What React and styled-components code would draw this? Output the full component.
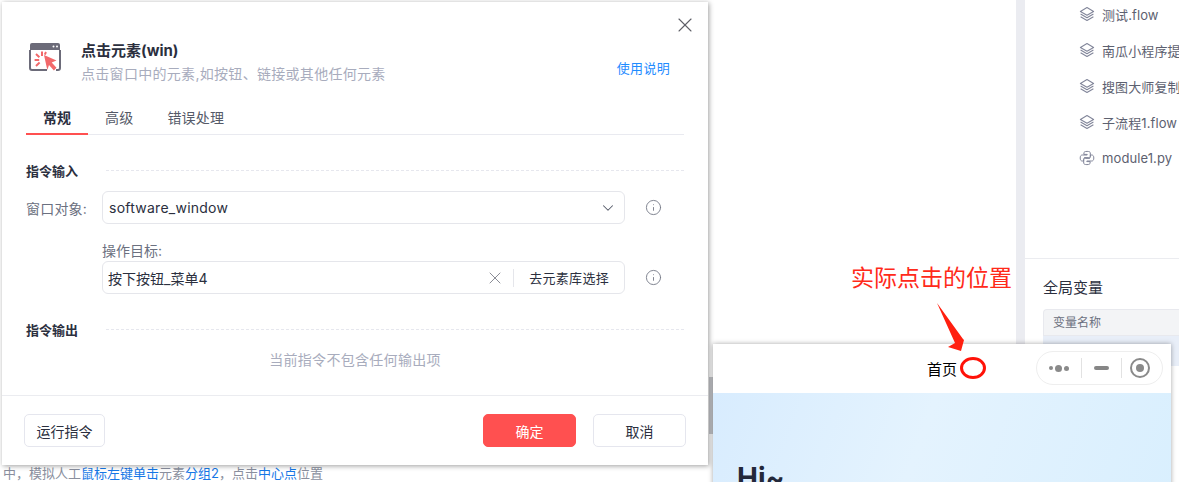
import React from "react";
import styled, { createGlobalStyle } from "styled-components";
import { X, ChevronDown, Info } from "lucide-react";

const Global = createGlobalStyle`
  html, body { margin: 0; padding: 0; height: 100%; background: #fff; overflow: hidden; }
  #root { width: 1179px; height: 482px; }
  * { box-sizing: border-box; }
  body { font-family: Inter, "Noto Sans CJK SC", "Noto Sans", sans-serif; }
`;

const Page = styled.div`
  position: relative;
  width: 1179px;
  height: 482px;
  display: flex;
  overflow: hidden;
  background: #fff;
`;
const Main = styled.main`
  width: 1016px;
  display: flex;
  flex-direction: column;
  justify-content: flex-end;
  padding: 0 0 0 3px;
`;
const DocLine = styled.p`
  margin: 0;
  height: 17px;
  font-size: 13px;
  line-height: 17px;
  color: #8a8f9e;
  white-space: nowrap;
`;
const DocLink = styled.span`
  color: #1677e6;
`;
const Gutter = styled.div`
  width: 9px;
  background: #ebecf1;
`;
const Side = styled.aside`
  flex: 1;
  min-width: 0;
  display: flex;
  flex-direction: column;
  overflow: hidden;
`;
const Tree = styled.ul`
  list-style: none;
  margin: -4px 0 0;
  padding: 0 0 0 54px;
  height: 263px;
  flex: none;
  border-bottom: 1px solid #ebecf0;
  display: flex;
  flex-direction: column;
`;
const TreeItem = styled.li`
  height: 36px;
  flex: none;
  display: flex;
  align-items: center;
  gap: 7px;
  font-size: 13px;
  letter-spacing: 0.1px;
  color: #5d6170;
  white-space: nowrap;
  & > svg {
    flex: none;
  }
`;
const Vars = styled.section`
  padding: 19px 0 0 18px;
`;
const VarsTitle = styled.h3`
  margin: 0 0 11px;
  font-size: 15px;
  line-height: 20px;
  font-weight: 400;
  color: #2b2f3e;
`;
const VarsHead = styled.div`
  height: 27px;
  padding-left: 9px;
  font-size: 12px;
  line-height: 26px;
  color: #6b7080;
  background: #f3f4f6;
  border: 1px solid #e8e9ee;
  border-right: 0;
  border-radius: 4px 0 0 0;
`;
const VarsRow = styled.div`
  height: 30px;
  background: #e8eef8;
`;

const Dialog = styled.div`
  position: absolute;
  left: 2px;
  top: 2px;
  width: 706px;
  height: 463px;
  background: #fff;
  box-shadow: 1px 1px 5px rgba(0, 0, 0, 0.38);
  display: flex;
  flex-direction: column;
`;
const CloseBtn = styled.button`
  position: absolute;
  right: 11px;
  top: 11px;
  width: 24px;
  height: 24px;
  padding: 0;
  border: 0;
  background: none;
  color: #5f6068;
  display: flex;
`;
const Header = styled.header`
  display: flex;
  align-items: flex-start;
  padding: 40px 38px 0 27px;
  height: 106px;
`;
const HeadIcon = styled.div`
  width: 34px;
  height: 30px;
  margin-right: 18px;
  flex: none;
`;
const HeadText = styled.div`
  flex: 1;
`;
const Title = styled.h2`
  margin: 0;
  font-size: 15px;
  line-height: 18px;
  font-weight: 700;
  color: #2b2f3e;
`;
const Sub = styled.p`
  margin: 5px 0 0;
  font-size: 14px;
  line-height: 18px;
  letter-spacing: 0.3px;
  color: #a8acbd;
`;
const HelpLink = styled.a`
  margin-top: 17px;
  font-size: 13px;
  line-height: 18px;
  letter-spacing: 0.3px;
  color: #1f8cff;
`;
const Tabs = styled.nav`
  display: flex;
  margin: 0 24px;
  height: 27px;
  border-bottom: 1px solid #e9eaf0;
`;
const Tab = styled.div`
  padding: 0 17px;
  font-size: 14px;
  line-height: 20px;
  letter-spacing: ${(p) => (p.$active ? 0 : 0.2)}px;
  font-weight: ${(p) => (p.$active ? 700 : 400)};
  color: ${(p) => (p.$active ? "#2b2f3e" : "#555a68")};
  border-bottom: 2px solid ${(p) => (p.$active ? "#ff5050" : "transparent")};
  height: 27px;
`;
const Body = styled.div`
  flex: 1;
  padding: 27px 24px 0;
  display: flex;
  flex-direction: column;
`;
const SectionHead = styled.div`
  display: flex;
  align-items: flex-start;
  height: 20px;
  margin-top: ${(p) => p.$mt || 0}px;
`;
const SectionTitle = styled.h4`
  margin: 0;
  width: 80px;
  font-size: 13px;
  line-height: 18px;
  font-weight: 700;
  color: #2b2f3e;
`;
const Dash = styled.div`
  flex: 1;
  margin-top: 8px;
  border-top: 1px dashed #e6e7ee;
`;
const Row = styled.div`
  display: flex;
  align-items: center;
  margin-top: ${(p) => p.$mt || 0}px;
`;
const RowLabel = styled.label`
  width: 76px;
  flex: none;
  font-size: 14px;
  letter-spacing: 0.2px;
  color: #6b7080;
  white-space: nowrap;
`;
const Field = styled.div`
  width: 523px;
  height: 33px;
  border: 1px solid #e5e6eb;
  border-radius: 6px;
  display: flex;
  align-items: center;
  padding: 0 ${(p) => p.$pr || 0}px 0 ${(p) => p.$pl || 6}px;
  font-size: 14px;
  color: #2b2f3e;
  background: #fff;
  margin-left: ${(p) => p.$ml || 0}px;
`;
const FieldText = styled.span`
  flex: 1;
  letter-spacing: ${(p) => p.$ls || 0}px;
`;
const InfoWrap = styled.span`
  display: flex;
  margin: -1px 0 0 20px;
  color: #777b88;
`;
const SubLabel = styled.div`
  margin: 18px 0 0 76px;
  font-size: 14px;
  line-height: 18px;
  color: #6b7080;
`;
const ClearBtn = styled.span`
  display: flex;
  color: #8b8d96;
  margin-right: 8px;
`;
const FieldBtn = styled.span`
  height: 18px;
  line-height: 18px;
  border-left: 1px solid #e5e6eb;
  padding: 0 15px;
  font-size: 13px;
  letter-spacing: 0.3px;
  color: #2b2f3e;
  white-space: nowrap;
`;
const Empty = styled.p`
  margin: 10px 0 0;
  text-align: center;
  font-size: 14px;
  line-height: 18px;
  letter-spacing: 0.3px;
  color: #a8acbd;
`;
const Footer = styled.footer`
  height: 70px;
  border-top: 1px solid #ebecf0;
  padding: 18px 22px 0;
  display: flex;
  align-items: flex-start;
`;
const Btn = styled.button`
  height: 33px;
  width: ${(p) => p.$w}px;
  margin-left: ${(p) => p.$ml || 0}px;
  border-radius: 5px;
  border: 1px solid ${(p) => (p.$primary ? "#ff5050" : "#e5e6ee")};
  background: ${(p) => (p.$primary ? "#ff5050" : "#fff")};
  color: ${(p) => (p.$primary ? "#fff" : "#2b2f3e")};
  font-family: inherit;
  font-size: 14px;
  padding: 0;
`;

const Annotation = styled.div`
  position: absolute;
  left: 851px;
  top: 262px;
  font-size: 23px;
  line-height: 32px;
  color: #ff2a1a;
  white-space: nowrap;
`;
const ArrowSvg = styled.svg`
  position: absolute;
  left: 930px;
  top: 298px;
  z-index: 2;
`;
const Inset = styled.div`
  position: absolute;
  left: 713px;
  top: 344px;
  width: 458px;
  height: 160px;
  background: #fff;
  box-shadow: 0 0 5px rgba(0, 0, 0, 0.35);
  display: flex;
  flex-direction: column;
`;
const InsetBar = styled.div`
  height: 49px;
  flex: none;
  display: flex;
  align-items: center;
  justify-content: space-between;
  padding: 0 8px 1px 214px;
  font-family: "Noto Sans CJK SC", sans-serif;
  font-size: 15px;
  color: #000;
`;
const InsetTitle = styled.span`
  flex: none;
`;
const Capsule = styled.div`
  width: 127px;
  height: 34px;
  flex: none;
  border: 1px solid #eeeeee;
  border-radius: 17px;
  display: flex;
  align-items: center;
`;
const CapCell = styled.div`
  width: ${(p) => p.$w}px;
  flex: none;
  height: 20px;
  padding-right: ${(p) => p.$pr || 0}px;
  display: flex;
  align-items: center;
  justify-content: center;
  & + & {
    border-left: 1px solid #e2e2e2;
  }
`;
const Dot = styled.i`
  display: block;
  width: ${(p) => p.$s}px;
  height: ${(p) => p.$s}px;
  border-radius: 50%;
  background: #8a8a8a;
  margin: 0 1px;
`;
const Minus = styled.i`
  display: block;
  width: 15px;
  height: 4px;
  border-radius: 2px;
  background: #868686;
`;
const Target = styled.i`
  display: flex;
  align-items: center;
  justify-content: center;
  width: 20px;
  height: 20px;
  border: 2px solid #8a8a8a;
  border-radius: 50%;
  &::after {
    content: "";
    width: 8px;
    height: 8px;
    border-radius: 50%;
    background: #8a8a8a;
  }
`;
const Ring = styled.div`
  position: absolute;
  left: 247px;
  top: 13px;
  width: 26px;
  height: 22px;
  border: 3px solid #ff1208;
  border-radius: 50%;
`;
const Hero = styled.div`
  flex: 1;
  padding: 68px 0 0 24px;
  background: linear-gradient(110deg, #d8ecfe 0%, #e4f3fe 45%, #d9effe 100%);
  font-family: Inter, sans-serif;
  font-size: 28px;
  line-height: 34px;
  font-weight: 700;
  color: #23283a;
`;
const Strip = styled.div`
  position: absolute;
  left: 709px;
  top: 377px;
  width: 4px;
  height: 57px;
  background: #c8c9cd;
`;

const LayersIcon = () => (
  <svg width="16" height="16" viewBox="0 0 16 16" fill="none" stroke="#82869a" strokeWidth="1.1" strokeLinejoin="round">
    <path d="M8 1.6 14.6 5.4 8 9.2 1.4 5.4Z" />
    <path d="M1.6 8 8 11.7 14.4 8" />
    <path d="M1.6 10.7 8 14.4 14.4 10.7" />
  </svg>
);
const PyIcon = () => (
  <svg width="16" height="16" viewBox="0 0 16 16" fill="none" stroke="#82869a" strokeWidth="1" strokeLinejoin="round">
    <path d="M5.4 7.6h4.4c.9 0 1.5-.7 1.5-1.5V3c0-1-.9-1.6-3.2-1.6S4.9 2 4.9 3v1.4h3.3v.6H3.2C2 5 1.2 6 1.2 8c0 2 .8 3 2 3h1.4V9.3c0-.9.6-1.7 1.6-1.7" />
    <path d="M10.6 8.4H6.2c-.9 0-1.5.7-1.5 1.5V13c0 1 .9 1.6 3.2 1.6s3.2-.6 3.2-1.6v-1.4H7.8V11h5c1.2 0 2-1 2-3s-.8-3-2-3h-1.4v1.7c0 .9-.6 1.7-1.6 1.7" />
  </svg>
);
const WindowIcon = () => (
  <svg width="33" height="30" viewBox="0 0 33 30" fill="none">
    <path d="M3 1h26a2 2 0 0 1 2 2v5H1V3a2 2 0 0 1 2-2Z" fill="#6c6b79" />
    <path d="M1 8v18a2 2 0 0 0 2 2h15M31 8v18a2 2 0 0 1-2 2h-2" stroke="#6c6b79" strokeWidth="2" />
    <circle cx="24.5" cy="4.6" r="1" fill="#fff" />
    <circle cx="28" cy="4.6" r="1" fill="#fff" />
    <path d="M15 13 27.5 18.5l-4.8 2 4.8 5.3-2.6 2.6-4.9-5.3-1.7 4.9Z" fill="#f2686a" />
    <path d="M13 9.5v4.5M7 12l3.4 3.2M5.6 18h4.6M7 24l3.6-3.4M17 10l-1.2 2.6" stroke="#f2686a" strokeWidth="2" />
  </svg>
);

const files = ["测试.flow", "南瓜小程序提取", "搜图大师复制", "子流程1.flow"];

export default function App() {
  return (
    <Page>
      <Global />
      <Main>
        <DocLine>
          中，模拟人工<DocLink>鼠标左键单击</DocLink>元素<DocLink>分组2</DocLink>，点击<DocLink>中心点</DocLink>位置
        </DocLine>
      </Main>
      <Gutter />
      <Side>
        <Tree>
          {files.map((f) => (
            <TreeItem key={f}>
              <LayersIcon />
              {f}
            </TreeItem>
          ))}
          <TreeItem>
            <PyIcon />
            module1.py
          </TreeItem>
        </Tree>
        <Vars>
          <VarsTitle>全局变量</VarsTitle>
          <VarsHead>变量名称</VarsHead>
          <VarsRow />
        </Vars>
      </Side>

      <Strip />
      <Dialog>
        <CloseBtn aria-label="关闭">
          <X size={24} strokeWidth={1.1} />
        </CloseBtn>
        <Header>
          <HeadIcon>
            <WindowIcon />
          </HeadIcon>
          <HeadText>
            <Title>点击元素(win)</Title>
            <Sub>点击窗口中的元素,如按钮、链接或其他任何元素</Sub>
          </HeadText>
          <HelpLink>使用说明</HelpLink>
        </Header>
        <Tabs>
          <Tab $active>常规</Tab>
          <Tab>高级</Tab>
          <Tab>错误处理</Tab>
        </Tabs>
        <Body>
          <SectionHead>
            <SectionTitle>指令输入</SectionTitle>
            <Dash />
          </SectionHead>
          <Row $mt={9}>
            <RowLabel>窗口对象:</RowLabel>
            <Field $pl={6} $pr={7}>
              <FieldText $ls={0.25}>software_window</FieldText>
              <ChevronDown size={18} color="#555a68" strokeWidth={1.4} />
            </Field>
            <InfoWrap>
              <Info size={17} strokeWidth={1.3} />
            </InfoWrap>
          </Row>
          <SubLabel>操作目标:</SubLabel>
          <Row $mt={1}>
            <Field $ml={76} $pl={5}>
              <FieldText>按下按钮_菜单4</FieldText>
              <ClearBtn>
                <X size={20} strokeWidth={1.2} />
              </ClearBtn>
              <FieldBtn>去元素库选择</FieldBtn>
            </Field>
            <InfoWrap>
              <Info size={17} strokeWidth={1.3} />
            </InfoWrap>
          </Row>
          <SectionHead $mt={27}>
            <SectionTitle>指令输出</SectionTitle>
            <Dash />
          </SectionHead>
          <Empty>当前指令不包含任何输出项</Empty>
        </Body>
        <Footer>
          <Btn $w={81}>运行指令</Btn>
          <Btn $w={93} $primary $ml={378}>确定</Btn>
          <Btn $w={93} $ml={17}>取消</Btn>
        </Footer>
      </Dialog>

      <Annotation>实际点击的位置</Annotation>
      <Inset>
        <InsetBar>
          <InsetTitle>首页</InsetTitle>
          <Ring />
          <Capsule>
            <CapCell $w={44}>
              <Dot $s={4} />
              <Dot $s={7} />
              <Dot $s={5} />
            </CapCell>
            <CapCell $w={40}>
              <Minus />
            </CapCell>
            <CapCell $w={41} $pr={4}>
              <Target />
            </CapCell>
          </Capsule>
        </InsetBar>
        <Hero>Hi~</Hero>
      </Inset>
      <ArrowSvg width="40" height="56" viewBox="0 0 40 56">
        <path d="M7 5 33 41 34 42 31 53 18 49 25 45Z" fill="#ff1f0f" />
      </ArrowSvg>
    </Page>
  );
}
